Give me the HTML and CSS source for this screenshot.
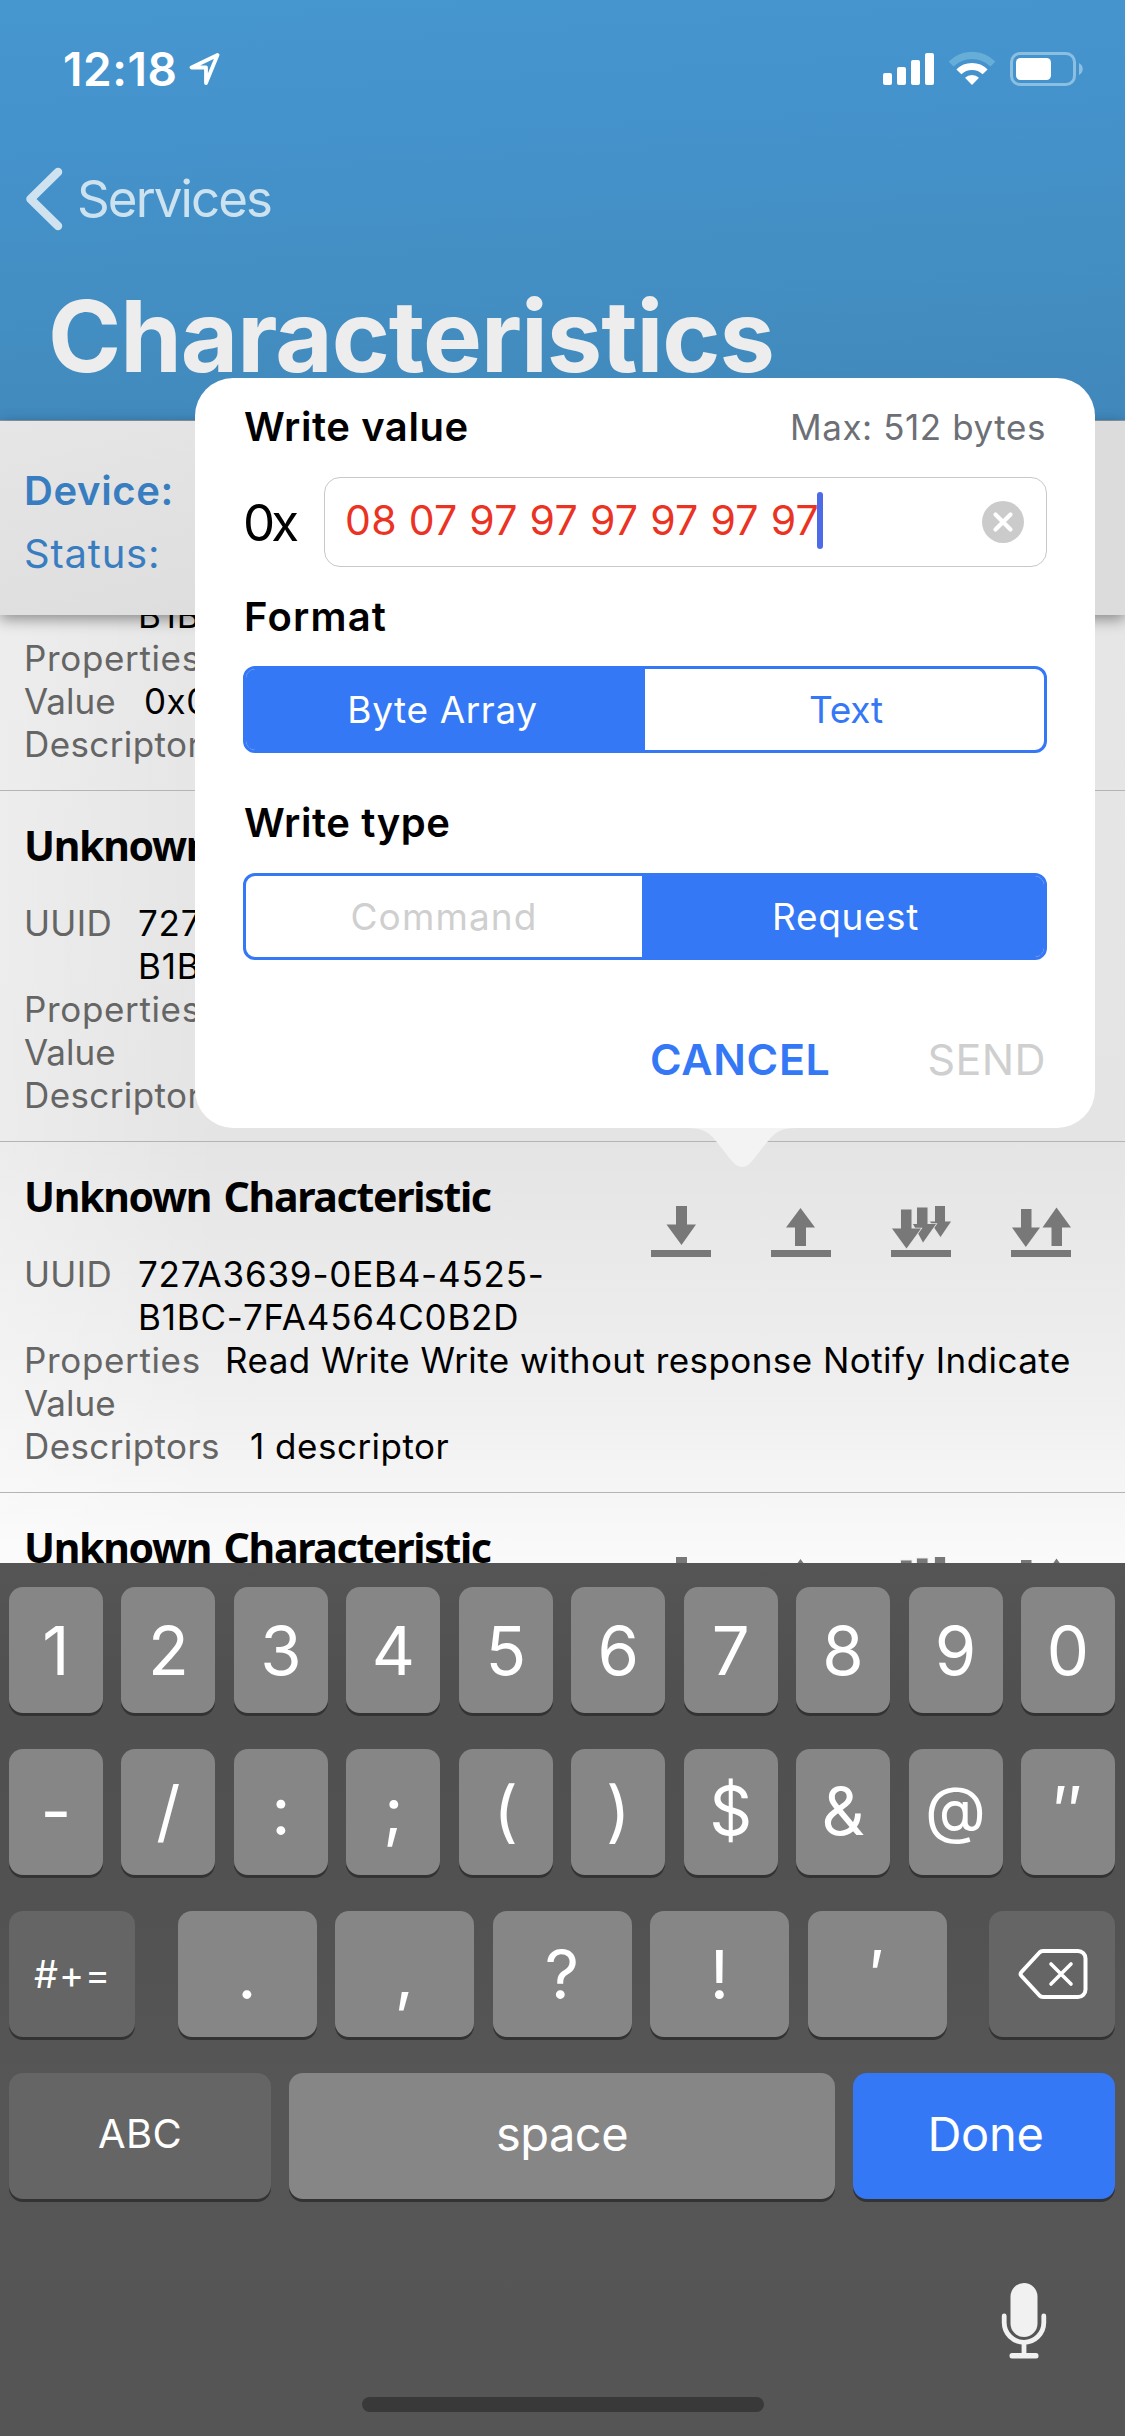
FILE: index.html
```
<!DOCTYPE html>
<html lang="en">
<head>
<meta charset="utf-8">
<title>Characteristics</title>
<link rel="stylesheet" href="styles.css">
</head>
<body>
<svg class="defs" width="0" height="0" aria-hidden="true">
  <symbol id="i-read" viewBox="0 0 60 52"><path d="M0 44h60v7H0zM25 0h11v18.500h9L30.500 39 15.500 18.500H25z"/></symbol>
  <symbol id="i-write" viewBox="0 0 60 52"><path d="M0 44h60v7H0zM29.500 2 44 21.500h-9V40H24V21.500h-9z"/></symbol>
  <symbol id="i-notify" viewBox="0 0 60 52">
    <path d="M0 44h60v7H0z"/>
    <path class="edge" d="M44 0h10v15.500h6L49.500 31 39 15.500h5z"/>
    <path class="edge" d="M26 1.500h10.500V18H45L32 36.500 22 18h4z"/>
    <path class="edge" d="M10 3.500h10.500v19H30L15.500 42.500 1 22.500h9z"/>
  </symbol>
  <symbol id="i-indicate" viewBox="0 0 60 52"><path d="M0 44h60v7H0zM10 3h10.500v18.500H29L14.800 41 1 21.500h9zM45.500 1.500 60 21.500h-9V40H40.500V21.500H31.500z"/></symbol>
</svg>

<div class="screen">
  <header class="header">
    <div class="status">
      <span class="time">12:18</span>
      <svg class="loc" width="32" height="34" viewBox="0 0 32 34"><path d="M28.500 3 2.500 15.500h14.500V31z" fill="none" stroke="#fff" stroke-width="3.800" stroke-linejoin="round"/></svg>
      <svg class="signal" width="52" height="34" viewBox="0 0 52 34" fill="#fff"><rect y="21" width="9" height="12" rx="2"/><rect x="14" y="15" width="9" height="18" rx="2"/><rect x="28" y="8" width="9" height="25" rx="2"/><rect x="42" y="1" width="9" height="32" rx="2"/></svg>
      <svg class="wifi" width="46" height="34" viewBox="0 0 46 34" fill="none"><path d="M2.100 12.100A29.500 29.500 0 0 1 43.900 12.100" stroke="#66add8" stroke-width="7"/><path d="M9.900 19.900A18.500 18.500 0 0 1 36.100 19.900" stroke="#fff" stroke-width="7"/><path d="M23 33l-7-7.200a10 10 0 0 1 14 0z" fill="#fff"/></svg>
      <svg class="battery" width="74" height="34" viewBox="0 0 74 34"><rect x="1.500" y="1.500" width="63" height="31" rx="8.500" fill="none" stroke="#8bbfe2" stroke-width="3"/><rect x="6" y="6" width="35" height="22" rx="4.500" fill="#fff"/><path d="M69 11c5 2.500 5 9.500 0 12z" fill="#8bbfe2"/></svg>
    </div>
    <div class="back">
      <svg width="38" height="64" viewBox="0 0 38 64"><path d="M33 5 5.500 32 33 59" fill="none" stroke="#cfe2ef" stroke-width="8.500" stroke-linecap="round" stroke-linejoin="round"/></svg>
      <span>Services</span>
    </div>
    <h1 class="title">Characteristics</h1>
  </header>

  <section class="device">
    <div class="device-name">Device:</div>
    <div class="device-status">Status:</div>
  </section>

  <main class="list">
    <article class="row">
      <h2>Unknown Characteristic</h2>
      <div class="field"><span class="label l-uuid">UUID</span><span class="uuid">727A3639-0EB4-4525-<br>B1BC-7FA4564C0B2D</span></div>
      <div class="field"><span class="label l-prop">Properties</span></div>
      <div class="field"><span class="label l-val">Value</span><span>0x01</span></div>
      <div class="field"><span class="label l-desc">Descriptors</span></div>
    </article>
    <article class="row">
      <h2>Unknown Characteristic</h2>
      <div class="field"><span class="label l-uuid">UUID</span><span class="uuid">727A3639-0EB4-4525-<br>B1BC-7FA4564C0B2D</span></div>
      <div class="field"><span class="label l-prop">Properties</span></div>
      <div class="field"><span class="label l-val">Value</span></div>
      <div class="field"><span class="label l-desc">Descriptors</span></div>
    </article>
    <article class="row">
      <div class="row-head">
        <h2>Unknown Characteristic</h2>
        <div class="actions"><svg><use href="#i-read"/></svg><svg><use href="#i-write"/></svg><svg><use href="#i-notify"/></svg><svg><use href="#i-indicate"/></svg></div>
      </div>
      <div class="field"><span class="label l-uuid">UUID</span><span class="uuid">727A3639-0EB4-4525-<br>B1BC-7FA4564C0B2D</span></div>
      <div class="field"><span class="label l-prop">Properties</span><span class="props">Read Write Write without response Notify Indicate</span></div>
      <div class="field"><span class="label l-val">Value</span></div>
      <div class="field"><span class="label l-desc">Descriptors</span><span>1 descriptor</span></div>
    </article>
    <article class="row">
      <div class="row-head">
        <h2>Unknown Characteristic</h2>
        <div class="actions"><svg><use href="#i-read"/></svg><svg><use href="#i-write"/></svg><svg><use href="#i-notify"/></svg><svg><use href="#i-indicate"/></svg></div>
      </div>
    </article>
  </main>

  <section class="keyboard">
    <div class="keys tens">
      <span class="key">1</span><span class="key">2</span><span class="key">3</span><span class="key">4</span><span class="key">5</span><span class="key">6</span><span class="key">7</span><span class="key">8</span><span class="key">9</span><span class="key">0</span>
    </div>
    <div class="keys tens symbols">
      <span class="key">-</span><span class="key">/</span><span class="key">:</span><span class="key">;</span><span class="key">(</span><span class="key">)</span><span class="key">$</span><span class="key">&amp;</span><span class="key at">@</span><span class="key">″</span>
    </div>
    <div class="keys punct">
      <span class="key dark more">#+=</span>
      <div class="punct-mid"><span class="key">.</span><span class="key">,</span><span class="key">?</span><span class="key">!</span><span class="key">′</span></div>
      <span class="key dark"><svg width="70" height="52" viewBox="0 0 70 52" fill="none" stroke="#fff" stroke-linecap="round" stroke-linejoin="round"><path d="M25 3h35a7.500 7.500 0 0 1 7.500 7.500v31A7.500 7.500 0 0 1 60 49H25a5 5 0 0 1-3.500-1.500L3.500 28a3 3 0 0 1 0-4L21.500 4.500A5 5 0 0 1 25 3z" stroke-width="4"/><path d="M33 16l20 20M53 16 33 36" stroke-width="3.600"/></svg></span>
    </div>
    <div class="keys bottom">
      <span class="key dark abc">ABC</span><span class="key word">space</span><span class="key word done">Done</span>
    </div>
    <div class="mic"><svg width="46" height="76" viewBox="0 0 46 76"><rect x="9.500" width="27" height="54" rx="13.500" fill="#f1f1f1"/><path d="M3.200 33v6.500a19.800 19.800 0 0 0 39.600 0V33M23 60v11" fill="none" stroke="#f1f1f1" stroke-width="4.800" stroke-linecap="round"/><rect x="8.500" y="70" width="29" height="5.500" rx="2.500" fill="#f1f1f1"/></svg></div>
    <div class="home"></div>
  </section>

  <div class="popover">
    <div class="line"><h3>Write value</h3><span class="max">Max: 512 bytes</span></div>
    <div class="entry">
      <span class="prefix">0x</span>
      <div class="input">
        <span class="value">08 07 97 97 97 97 97 97</span><i class="caret"></i>
        <svg class="clear" width="42" height="42" viewBox="0 0 42 42"><circle cx="21" cy="21" r="21" fill="#cbcbcb"/><path d="M13.500 13.500l15 15M28.500 13.500l-15 15" stroke="#fff" stroke-width="4.200" stroke-linecap="round"/></svg>
      </div>
    </div>
    <h3 class="h-format">Format</h3>
    <div class="segment"><span class="on array">Byte Array</span><span class="text">Text</span></div>
    <h3 class="h-type">Write type</h3>
    <div class="segment type"><span class="off">Command</span><span class="on request">Request</span></div>
    <div class="buttons"><span class="cancel">CANCEL</span><span class="send">SEND</span></div>
    <svg class="tail" width="108" height="40" viewBox="0 0 108 40"><path d="M0 0C13 0 20 3 28 13L43 32Q54 46 65 32L80 13C88 3 95 0 108 0Z" fill="#f3f3f3"/></svg>
  </div>
</div>
</body>
</html>
```
FILE: styles.css
```
* { box-sizing: border-box; }
body { margin: 0; font-family: Inter, "Liberation Sans", sans-serif; }
h1, h2, h3 { margin: 0; }
svg { display: block; flex: none; }
.defs { position: absolute; }

.screen {
  position: relative;
  display: flex;
  flex-direction: column;
  width: 1125px;
  height: 2436px;
  overflow: hidden;
}

/* Navigation header */
.header {
  height: 421px;
  background: linear-gradient(177deg, #4696d0 0%, #4491ca 42%, #438fc3 60%, #4188bc 100%);
  border-bottom: 1px solid #8f9ba5;
}
.status {
  display: flex;
  align-items: center;
  height: 138px;
  padding: 0 41px 0 63px;
}
.time { color: #fff; font-size: 46px; font-weight: 600; letter-spacing: .57px; line-height: 60px; }
.loc { margin: 0 auto 0 11px; }
.signal { margin-right: 14px; }
.wifi { margin-right: 15px; }
.back {
  display: flex;
  align-items: center;
  height: 122px;
  padding-left: 25px;
  gap: 14px;
  color: #cde2ef;
  font-size: 51px;
  letter-spacing: -1.9px;
}
.back span { padding-bottom: 2px; }
.title {
  padding-left: 48px;
  color: #ededed;
  font-size: 99px;
  font-weight: 700;
  line-height: 153px;
  letter-spacing: -1.03px;
}

/* Device summary */
.device {
  position: relative;
  z-index: 1;
  height: 194px;
  padding: 38px 24px 0;
  background: linear-gradient(165deg, #e6e6e6, #dcdcdc 60%);
  color: #397dc1;
  font-size: 40px;
  line-height: 63px;
  box-shadow: 0 4px 14px rgba(0, 0, 0, .42);
}
.device-name { font-weight: 600; letter-spacing: .63px; }
.device-status { letter-spacing: .79px; }

/* Characteristic list */
.list {
  height: 948px;
  overflow: hidden;
  background:
    linear-gradient(90deg, rgba(255, 255, 255, .3), rgba(255, 255, 255, 0) 220px),
    linear-gradient(#e6e6e6, #e4e4e4 55%, #efefef 82%, #fafafa);
}
.row {
  height: 351px;
  padding: 30px 24px 0;
  border-bottom: 1px solid #b4b4b6;
}
.row:first-child { margin-top: -175px; }
.row-head { display: flex; justify-content: space-between; }
.row h2 {
  height: 81px;
  font-family: "Noto Sans", sans-serif;
  font-size: 41px;
  font-weight: 700;
  line-height: 48px;
  letter-spacing: -1.3px;
  word-spacing: 3px;
  white-space: nowrap;
}
.actions { display: flex; gap: 60px; padding: 34px 30px 0 0; height: 81px; }
.actions svg { width: 60px; height: 52px; fill: #787878; overflow: visible; }
.edge { stroke: #e5e5e5; stroke-width: 1.6px; paint-order: stroke; }
.field {
  display: flex;
  font-size: 35px;
  line-height: 43px;
  letter-spacing: .5px;
  white-space: nowrap;
}
.label { flex: none; color: #656565; }
.l-uuid { width: 114px; letter-spacing: .3px; }
.l-prop { width: 201px; letter-spacing: .65px; }
.l-val { width: 120px; letter-spacing: 0; }
.l-desc { width: 226px; letter-spacing: .4px; }
.uuid { letter-spacing: .8px; }
.props { letter-spacing: .44px; }

/* Keyboard */
.keyboard {
  display: flex;
  flex-direction: column;
  height: 873px;
  padding: 24px 10px 0 9px;
  background: linear-gradient(#555, #505050 15%, #515151 35%, #565656 60%, #555);
}
.keys { display: flex; height: 126px; margin-bottom: 36px; }
.key {
  display: flex;
  align-items: center;
  justify-content: center;
  border-radius: 14px;
  background: #868686;
  box-shadow: 0 3px 0 #333;
  color: #fff;
  font-size: 67px;
}
.tens { display: grid; grid-template-columns: repeat(10, 94px); justify-content: space-between; }
.symbols .key { padding-bottom: 3px; }
.symbols .at { padding-bottom: 6px; font-size: 63px; }
.dark { background: #656565; }
.punct { justify-content: space-between; }
.punct > .key { width: 126px; padding-left: 1px; }
.punct-mid { display: grid; grid-template-columns: repeat(5, 139px); gap: 18.5px; }
.more { font-size: 38px; letter-spacing: .9px; }
.bottom { gap: 18px; margin-bottom: 84px; }
.bottom .key { width: 262px; padding-bottom: 5px; }
.bottom .word { flex: 1; font-size: 47px; letter-spacing: -.5px; }
.bottom .done { flex: none; width: 262px; padding-left: 3px; background: #3478f6; letter-spacing: -.3px; }
.bottom .abc { font-size: 40px; letter-spacing: .3px; }
.mic { display: flex; justify-content: flex-end; padding-right: 68px; height: 114px; }
.home { width: 402px; height: 15px; margin-left: 353px; border-radius: 8px; background: #393939; }

/* Write value popover */
.popover {
  position: absolute;
  z-index: 2;
  top: 378px;
  left: 195px;
  width: 900px;
  height: 750px;
  padding: 24px 48px 0;
  border-radius: 38px;
  background: #fff;
}
h3 { padding-left: 1px; font-size: 40px; font-weight: 600; line-height: 50px; letter-spacing: .58px; }
.line { display: flex; justify-content: space-between; }
.max { padding-right: 1px; color: #6d6f77; font-size: 35px; line-height: 50px; letter-spacing: .58px; }
.entry { display: flex; align-items: center; justify-content: space-between; margin-top: 25px; }
.prefix { font-size: 51px; letter-spacing: -4px; }
.input {
  display: flex;
  align-items: center;
  width: 723px;
  height: 90px;
  padding: 0 22px 0 20px;
  border: 1px solid #c8c8c8;
  border-radius: 16px;
}
.value { padding-bottom: 4px; color: #eb3323; font-size: 41px; letter-spacing: .3px; white-space: nowrap; }
.caret { width: 6px; height: 57px; margin: 0 0 4px -2px; border-radius: 3px; background: #4d6be8; }
.clear { margin-left: auto; }
.h-format { margin-top: 25px; letter-spacing: 1.2px; }
.segment {
  display: flex;
  height: 87px;
  margin-top: 24px;
  border: 3px solid #3478f6;
  border-radius: 12px;
  overflow: hidden;
  color: #3478f6;
  font-size: 37px;
  line-height: 81px;
  letter-spacing: .6px;
  text-align: center;
}
.segment span { flex: 1; }
.segment .on { background: #3478f6; color: #fff; }
.segment .off { color: #cfcfcf; letter-spacing: 1.1px; }
.segment .array { flex: 0 0 399px; padding-right: 6px; }
.segment .request { flex: 0 0 402px; padding-left: 5px; }
.segment .text { padding-left: 3px; letter-spacing: -.2px; }
.h-type { margin-top: 45px; }
.type { margin-top: 25px; }
.buttons {
  display: flex;
  justify-content: flex-end;
  gap: 97px;
  margin-top: 74px;
  padding-right: 1px;
  font-size: 43px;
  line-height: 50px;
}
.cancel { color: #3478f6; font-weight: 600; letter-spacing: .65px; }
.send { color: #cfcfcf; letter-spacing: .4px; }
.tail { position: absolute; top: 750px; left: 493px; }
```
